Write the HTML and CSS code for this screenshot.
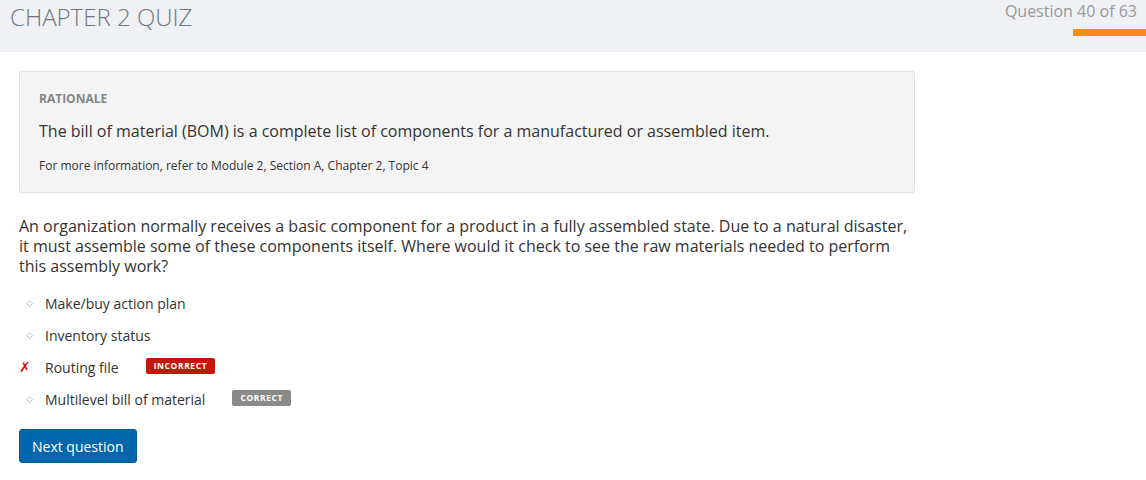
FILE: index.html
```html
<!DOCTYPE html>
<html>
<head>
<meta charset="utf-8">
<link rel="stylesheet" href="styles.css">
</head>
<body>
<header class="topbar">
  <h1 class="title">CHAPTER 2 QUIZ</h1>
  <div class="progress">
    <div class="progress-text">Question 40 of 63</div>
    <div class="progress-bar"></div>
  </div>
</header>
<main class="content">
  <section class="rationale">
    <div class="rationale-label">RATIONALE</div>
    <p class="rationale-text">The bill of material (BOM) is a complete list of components for a manufactured or assembled item.</p>
    <p class="rationale-ref">For more information, refer to Module 2, Section A, Chapter 2, Topic 4</p>
  </section>
  <p class="question">An organization normally receives a basic component for a product in a fully assembled state. Due to a natural disaster, it must assemble some of these components itself. Where would it check to see the raw materials needed to perform this assembly work?</p>
  <ul class="options">
    <li class="option"><span class="marker"><svg width="7" height="7" viewBox="0 0 7 7"><path d="M3.5 0.5 L6.5 3.5 L3.5 6.5 L0.5 3.5 Z" fill="none" stroke="#c4c4c4" stroke-width="1"/></svg></span><span class="opt-text">Make/buy action plan</span></li>
    <li class="option"><span class="marker"><svg width="7" height="7" viewBox="0 0 7 7"><path d="M3.5 0.5 L6.5 3.5 L3.5 6.5 L0.5 3.5 Z" fill="none" stroke="#c4c4c4" stroke-width="1"/></svg></span><span class="opt-text">Inventory status</span></li>
    <li class="option"><span class="marker wrong">✗</span><span class="opt-text">Routing file</span><span class="badge badge-incorrect">INCORRECT</span></li>
    <li class="option"><span class="marker"><svg width="7" height="7" viewBox="0 0 7 7"><path d="M3.5 0.5 L6.5 3.5 L3.5 6.5 L0.5 3.5 Z" fill="none" stroke="#c4c4c4" stroke-width="1"/></svg></span><span class="opt-text">Multilevel bill of material</span><span class="badge badge-correct">CORRECT</span></li>
  </ul>
  <button class="next-btn">Next question</button>
</main>
</body>
</html>
```
FILE: styles.css
```css
* { box-sizing: border-box; }
html, body { margin: 0; padding: 0; background: #fff; }
body {
  font-family: "Open Sans", "Liberation Sans", sans-serif;
  color: #333;
  width: 1146px;
}
.topbar {
  height: 52px;
  background: #eff1f5;
  display: flex;
  justify-content: space-between;
  align-items: flex-start;
}
.title {
  margin: 0;
  padding: 2px 0 0 10px;
  font-size: 24px;
  font-weight: 300;
  color: #6f7680;
  line-height: 30px;
}
.progress {
  display: flex;
  flex-direction: column;
  align-items: flex-end;
}
.progress-text {
  font-size: 16px;
  color: #999;
  line-height: 20px;
  padding: 1px 9px 0 0;
}
.progress-bar {
  width: 73px;
  height: 7px;
  background: #f28c1e;
  margin-top: 8px;
  border-radius: 1px 0 0 1px;
}
.content {
  padding: 19px 0 0 19px;
  width: 915px;
}
.rationale {
  background: #f4f4f4;
  border: 1px solid #dedede;
  border-radius: 3px;
  padding: 19px 19px 19px 19px;
  height: 122px;
}
.rationale-label {
  font-size: 12px;
  font-weight: 700;
  color: #858585;
  line-height: 16px;
}
.rationale-text {
  margin: 13px 0 0;
  font-size: 16px;
  line-height: 22px;
  color: #333;
}
.rationale-ref {
  margin: 16px 0 0;
  font-size: 12px;
  line-height: 16px;
  color: #333;
}
.question {
  margin: 23px 0 0;
  font-size: 16px;
  line-height: 20px;
  width: 895px;
  color: #333;
}
.options {
  list-style: none;
  margin: 11px 0 0;
  padding: 0;
}
.option {
  display: flex;
  align-items: center;
  height: 32px;
  font-size: 14px;
}
.marker {
  width: 26px;
  display: flex;
  align-items: center;
  padding-left: 7px;
}
.marker.wrong {
  color: #e01010;
  font-size: 14px;
  font-style: italic;
  font-weight: 700;
  padding-left: 0;
  font-family: "DejaVu Sans", sans-serif;
}
.opt-text {
  color: #333;
}
.badge {
  display: inline-block;
  font-size: 8.5px;
  font-weight: 700;
  letter-spacing: 0.6px;
  color: #fff;
  padding: 0 8px;
  height: 16px;
  line-height: 16px;
  border-radius: 2px;
  margin-bottom: 3px;
}
.badge-incorrect {
  background: #c4170c;
  margin-left: 27px;
}
.badge-correct {
  background: #8a8a8a;
  margin-left: 27px;
}
.next-btn {
  margin-top: 14px;
  background: #0067ad;
  color: #fff;
  border: 1px solid #005d9c;
  border-radius: 3px;
  font-family: "Open Sans", "Liberation Sans", sans-serif;
  font-size: 14px;
  height: 34px;
  padding: 0 12px;
  cursor: pointer;
}
```
